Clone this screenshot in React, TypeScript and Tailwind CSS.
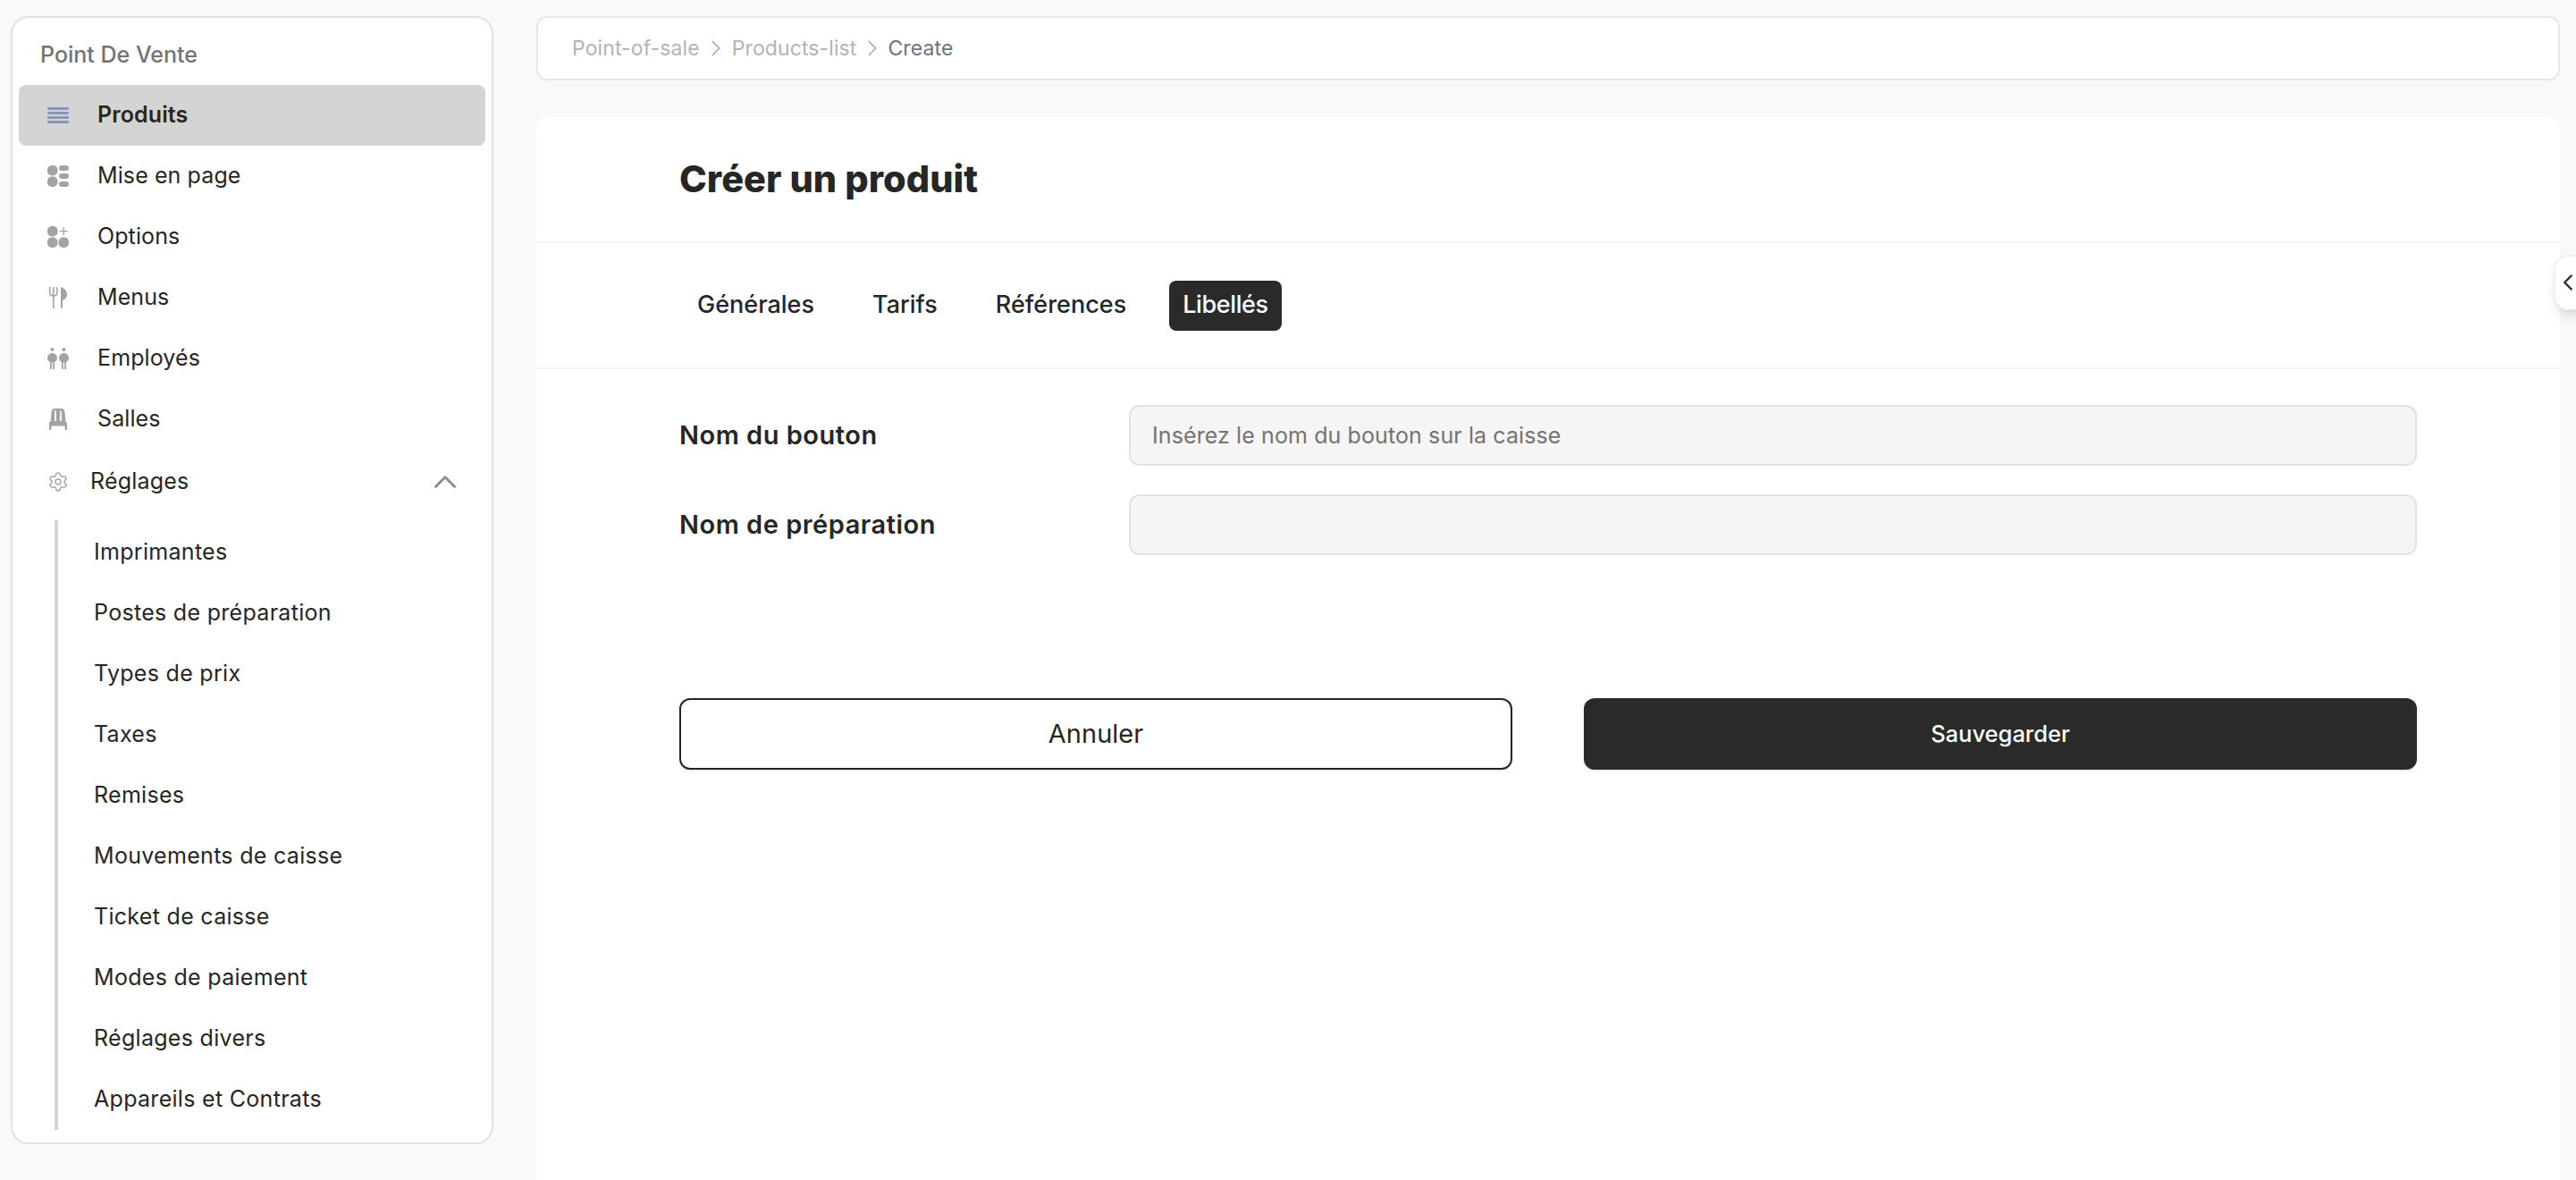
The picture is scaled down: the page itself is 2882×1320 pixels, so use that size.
import { ChevronLeft, ChevronRight, ChevronUp, Settings } from "lucide-react";
import React from "react";

const ListIcon = () => (
  <svg width="24" height="18" viewBox="0 0 24 18" fill="#8a93b8">
    <rect y="0" width="24" height="3" rx="1" />
    <rect y="5" width="24" height="3" rx="1" />
    <rect y="10" width="24" height="3" rx="1" />
    <rect y="15" width="24" height="3" rx="1" />
  </svg>
);

const LayoutIcon = () => (
  <svg width="24" height="24" viewBox="0 0 24 24" fill="#a3a3a3">
    <rect width="11.500" height="11.500" rx="5" />
    <rect y="12.500" width="11.500" height="11.500" rx="5" />
    <rect x="13" y="0" width="11" height="6" rx="3" />
    <rect x="13" y="9" width="11" height="6" rx="3" />
    <rect x="13" y="18" width="11" height="6" rx="3" />
  </svg>
);

const OptionsIcon = () => (
  <svg width="24" height="24" viewBox="0 0 24 24" fill="#a3a3a3">
    <rect width="11.500" height="11.500" rx="5" />
    <rect y="12.500" width="11.500" height="11.500" rx="5" />
    <rect x="12.500" y="12.500" width="11.500" height="11.500" rx="5" />
    <path d="M17.600 1h1.300v4h4v1.300h-4v4h-1.300v-4h-4V5h4z" />
  </svg>
);

const MenuIcon = () => (
  <svg width="20" height="24" viewBox="0 0 20 24" fill="#a3a3a3">
    <path d="M0 0h1.500v6.500c0 1.400.9 2.400 2.500 2.700V0h1.600v9.200c1.600-.3 2.500-1.300 2.500-2.700V0h1.500v6.500c0 2.400-1.600 4-4 4.300V24H4V10.800C1.600 10.500 0 8.900 0 6.500z" />
    <path d="M13 0c4 1 7 4.600 7 8.500 0 3-1.700 5.500-5 6.500v7.500c0 .9-.7 1.500-2 1.500z" />
  </svg>
);

const PeopleIcon = () => (
  <svg width="24" height="24" viewBox="0 0 24 24" fill="#a3a3a3">
    <circle cx="5.500" cy="2" r="2" />
    <circle cx="18.500" cy="2" r="2" />
    <path d="M5.500 6C8.500 6 11 8.500 11 11.500c0 2.300-1.300 3.800-3 4.500v8H6.200v-7.500H4.800V24H3v-8c-1.700-.7-3-2.200-3-4.500C0 8.500 2.500 6 5.500 6z" />
    <path d="M18.500 6c3 0 5.500 2.500 5.500 5.500 0 2.300-1.300 3.800-3 4.500v8h-1.800v-7.500h-1.400V24H16v-8c-1.700-.7-3-2.200-3-4.500C13 8.500 15.500 6 18.500 6z" />
  </svg>
);

const ChairIcon = () => (
  <svg width="20" height="24" viewBox="0 0 20 24" fill="#a3a3a3">
    <path
      fillRule="evenodd"
      d="M6.500 0h7C16 0 17.500 1.700 17.500 4l.9 10.500c.9.300 1.600 1.100 1.600 2.300V23c0 .6-.4 1-1 1h-.4c-.6 0-1-.4-1-1v-3.500H2.400V23c0 .6-.4 1-1 1H1c-.6 0-1-.4-1-1v-6.200c0-1.200.7-2 1.600-2.300L2.500 4C2.500 1.700 4 0 6.500 0zM6.300 2.500 5.900 14h2V2.500zM12.100 2.500V14h2l-.4-11.500z"
    />
  </svg>
);

const mainItems = [
  { label: "Produits", icon: <ListIcon />, active: true },
  { label: "Mise en page", icon: <LayoutIcon /> },
  { label: "Options", icon: <OptionsIcon /> },
  { label: "Menus", icon: <MenuIcon /> },
  { label: "Employés", icon: <PeopleIcon /> },
  { label: "Salles", icon: <ChairIcon /> },
];

const settingsItems = [
  "Imprimantes",
  "Postes de préparation",
  "Types de prix",
  "Taxes",
  "Remises",
  "Mouvements de caisse",
  "Ticket de caisse",
  "Modes de paiement",
  "Réglages divers",
  "Appareils et Contrats",
];

const tabs = ["Générales", "Tarifs", "Références", "Libellés"];

const Sidebar = () => (
  <aside className="mt-[18px] ml-[12px] flex h-[1262px] w-[540px] shrink-0 flex-col rounded-[20px] border-2 border-[#e2e2e2] bg-white px-[7px]">
    <h2 className="flex h-[75px] items-center pt-[8px] pl-[24px] text-[25px] font-medium text-[#737373]">
      Point De Vente
    </h2>
    <nav className="flex flex-col">
      {mainItems.map((item) => (
        <div
          key={item.label}
          className={`flex h-[68px] items-center rounded-lg pl-[32px] text-[25px] tracking-[0.1px] text-[#262626] ${
            item.active ? "bg-[#d4d4d4] font-semibold" : ""
          }`}
        >
          <span className="flex w-[24px] shrink-0 justify-center">{item.icon}</span>
          <span className="ml-[32px]">{item.label}</span>
        </div>
      ))}
      <div className="mt-[2px] flex h-[68px] items-center pl-[32px] text-[25px] tracking-[0.2px] text-[#262626]">
        <Settings size={24} strokeWidth={1.4} className="text-[#a3a3a3]" />
        <span className="ml-[24px]">Réglages</span>
        <ChevronUp size={42} strokeWidth={1.7} className="mr-[24px] ml-auto text-[#8c8c8c]" />
      </div>
    </nav>
    <ul className="mt-[9px] ml-[40px] border-l-4 border-[#d4d4d4] pt-[2px] pl-[40px]">
      {settingsItems.map((item) => (
        <li key={item} className="flex h-[68px] items-center text-[25px] tracking-[0.3px] text-[#262626]">
          {item}
        </li>
      ))}
    </ul>
  </aside>
);

const Breadcrumb = () => (
  <div className="flex h-[72px] items-center rounded-xl border-2 border-[#e5e7eb] bg-white pl-[38px] text-[23px] tracking-[0.1px] text-[#b3b3b3]">
    <span>Point-of-sale</span>
    <ChevronRight size={30} strokeWidth={1.1} className="mx-[3px] text-[#9ca3af]" />
    <span>Products-list</span>
    <ChevronRight size={30} strokeWidth={1.1} className="mr-[2px] ml-[3px] text-[#9ca3af]" />
    <span className="text-[#6b7280]">Create</span>
  </div>
);

const Field = ({ label, placeholder }: { label: string; placeholder?: string }) => (
  <div className="flex items-center">
    <label className="w-[503px] shrink-0 text-[29px] font-semibold tracking-[0.5px] text-[#262626]">{label}</label>
    <input
      placeholder={placeholder}
      className="h-[68px] flex-1 rounded-xl border-2 border-[#e2e2e2] bg-[#f5f5f5] px-[24px] text-[25px] tracking-[0.1px] placeholder:text-[#737373]"
    />
  </div>
);

export default function App() {
  return (
    <div className="relative flex h-[1320px] w-[2882px] overflow-hidden bg-[#f9f9fb] font-['Inter',sans-serif]">
      <Sidebar />
      <main className="mt-[18px] ml-[48px] flex w-[2264px] flex-col">
        <Breadcrumb />
        <section className="mt-[41px] flex-1 rounded-t-xl bg-white">
          <div className="flex h-[141px] items-center border-b-2 border-[#f3f4f6] px-[160px]">
            <h1 className="text-[41.5px] font-extrabold text-[#262626]">Créer un produit</h1>
          </div>
          <div className="flex h-[141px] items-center gap-[33px] border-b-2 border-[#f3f4f6] pl-[164px]">
            {tabs.map((tab) => (
              <button
                key={tab}
                className={`flex h-[56px] items-center rounded-lg text-[27px] font-medium ${
                  tab === "Libellés"
                    ? "-ml-[1px] bg-[#2a2a2a] px-[15px] tracking-[-0.4px] text-white"
                    : "px-[16px] text-[#262626]"
                }`}
              >
                {tab}
              </button>
            ))}
          </div>
          <div className="flex flex-col gap-[32px] px-[160px] pt-[40px]">
            <Field label="Nom du bouton" placeholder="Insérez le nom du bouton sur la caisse" />
            <Field label="Nom de préparation" />
          </div>
          <div className="mt-[160px] grid grid-cols-2 gap-[80px] px-[160px]">
            <button className="h-[80px] rounded-xl border-2 border-[#262626] bg-white text-[29px] text-[#262626] shadow-sm">
              Annuler
            </button>
            <button className="h-[80px] rounded-xl bg-[#2a2a2a] text-[25.5px] font-medium text-white shadow-sm">
              Sauvegarder
            </button>
          </div>
        </section>
      </main>
      <div className="absolute top-[285px] right-[-20px] flex h-[62px] w-[45px] items-center rounded-2xl border-2 border-[#f0f0f0] bg-white shadow-lg">
        <ChevronLeft size={30} strokeWidth={1.9} className="-ml-[1px] text-[#1f2937]" />
      </div>
    </div>
  );
}
